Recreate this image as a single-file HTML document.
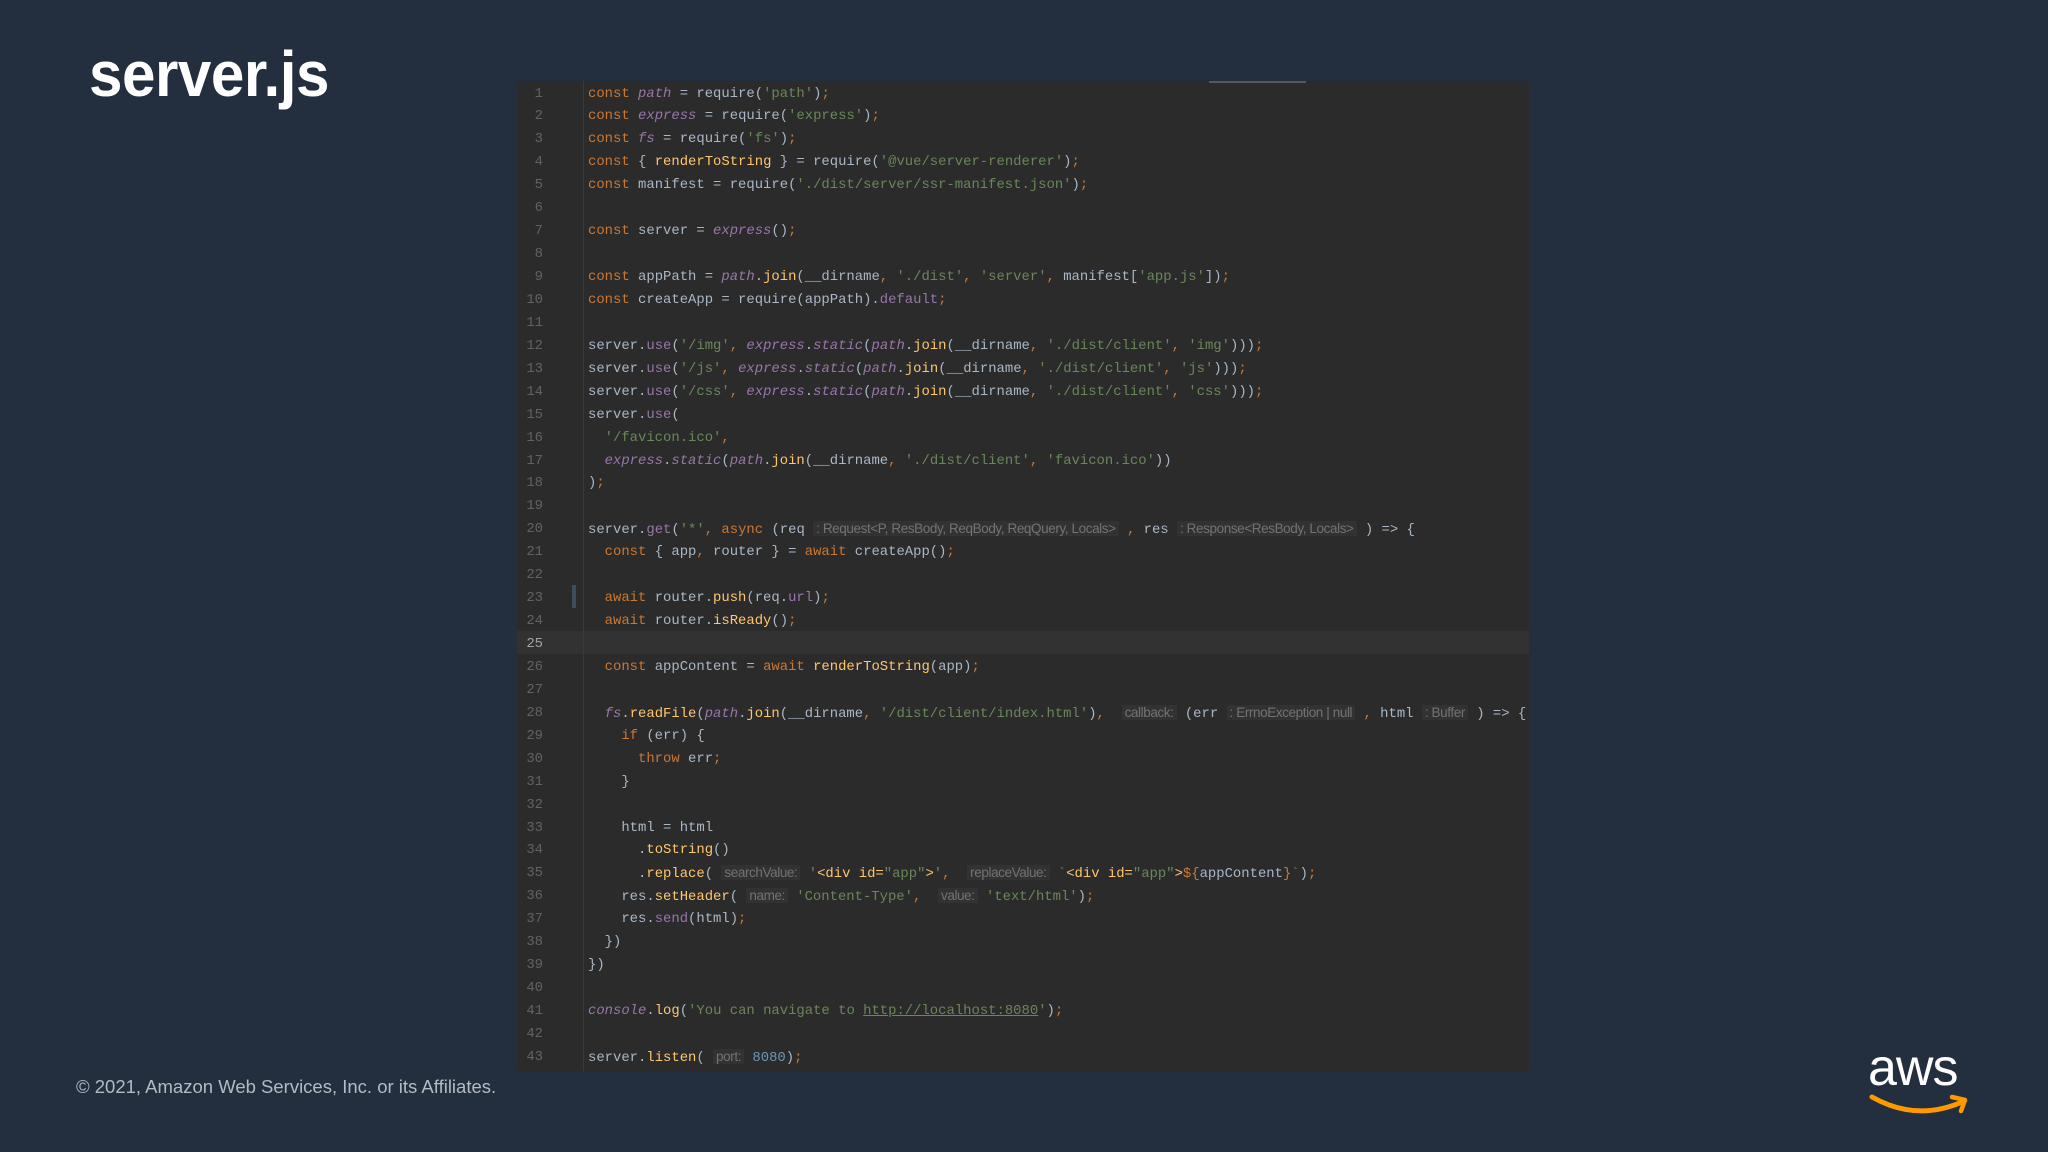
<!DOCTYPE html>
<html><head><meta charset="utf-8"><style>
html,body{margin:0;padding:0}
body{width:2048px;height:1152px;background:#232f3e;position:relative;overflow:hidden;font-family:"Liberation Sans",sans-serif}
.title{position:absolute;left:89px;top:37px;color:#fff;font-weight:bold;font-size:64px;transform:scaleX(0.94);transform-origin:left top;letter-spacing:-0.5px}
.copy{position:absolute;left:76px;top:1076px;color:#b4bac3;font-size:18.5px}
.panel{position:absolute;left:517px;top:81px;width:1012px;height:990px;background:#2b2b2b}
.topline{position:absolute;left:692px;top:0;width:97px;height:2px;background:#55595e}
.sep{position:absolute;left:66px;top:0;width:1px;height:990px;background:#3a3a3a}
.hl{position:absolute;left:0;right:0;top:550px;height:23px;background:#323232}
.mark{position:absolute;left:55px;top:504px;width:4px;height:23px;background:#3d4d5c}
.lines{position:absolute;left:0;top:1.5px;font-family:"Liberation Mono",monospace;font-size:13.9px;color:#a9b7c6}
.l{height:22.95px;line-height:22.95px;white-space:pre;position:relative}
.n{position:absolute;left:0;width:26px;text-align:right;color:#5f6366}
.n.c{color:#a4a3a3}
.t{position:absolute;left:71px}
.k{color:#cc7832}.s{color:#6a8759}.p{color:#9876aa;font-style:italic}.f{color:#ffc66d}.m{color:#9876aa}.nu{color:#6897bb}
.h{font-family:"Liberation Sans",sans-serif;font-size:13.5px;color:#737373;background:#323232;padding:0 3px;letter-spacing:-0.4px}
.u{text-decoration:underline}
</style></head><body>
<div class="title">server.js</div>
<div class="panel">
<div class="hl"></div><div class="mark"></div>
<div class="topline"></div><div class="sep"></div>
<div class="lines">
<div class="l"><span class="n">1</span><span class="t"><span class="k">const</span> <span class="p">path</span> = require(<span class="s">'path'</span>)<span class="k">;</span></span></div>
<div class="l"><span class="n">2</span><span class="t"><span class="k">const</span> <span class="p">express</span> = require(<span class="s">'express'</span>)<span class="k">;</span></span></div>
<div class="l"><span class="n">3</span><span class="t"><span class="k">const</span> <span class="p">fs</span> = require(<span class="s">'fs'</span>)<span class="k">;</span></span></div>
<div class="l"><span class="n">4</span><span class="t"><span class="k">const</span> { <span class="f">renderToString</span> } = require(<span class="s">'@vue/server-renderer'</span>)<span class="k">;</span></span></div>
<div class="l"><span class="n">5</span><span class="t"><span class="k">const</span> manifest = require(<span class="s">'./dist/server/ssr-manifest.json'</span>)<span class="k">;</span></span></div>
<div class="l"><span class="n">6</span></div>
<div class="l"><span class="n">7</span><span class="t"><span class="k">const</span> server = <span class="p">express</span>()<span class="k">;</span></span></div>
<div class="l"><span class="n">8</span></div>
<div class="l"><span class="n">9</span><span class="t"><span class="k">const</span> appPath = <span class="p">path</span>.<span class="f">join</span>(__dirname<span class="k">,</span> <span class="s">'./dist'</span><span class="k">,</span> <span class="s">'server'</span><span class="k">,</span> manifest[<span class="s">'app.js'</span>])<span class="k">;</span></span></div>
<div class="l"><span class="n">10</span><span class="t"><span class="k">const</span> createApp = require(appPath).<span class="m">default</span><span class="k">;</span></span></div>
<div class="l"><span class="n">11</span></div>
<div class="l"><span class="n">12</span><span class="t">server.<span class="m">use</span>(<span class="s">'/img'</span><span class="k">,</span> <span class="p">express</span>.<span class="p">static</span>(<span class="p">path</span>.<span class="f">join</span>(__dirname<span class="k">,</span> <span class="s">'./dist/client'</span><span class="k">,</span> <span class="s">'img'</span>)))<span class="k">;</span></span></div>
<div class="l"><span class="n">13</span><span class="t">server.<span class="m">use</span>(<span class="s">'/js'</span><span class="k">,</span> <span class="p">express</span>.<span class="p">static</span>(<span class="p">path</span>.<span class="f">join</span>(__dirname<span class="k">,</span> <span class="s">'./dist/client'</span><span class="k">,</span> <span class="s">'js'</span>)))<span class="k">;</span></span></div>
<div class="l"><span class="n">14</span><span class="t">server.<span class="m">use</span>(<span class="s">'/css'</span><span class="k">,</span> <span class="p">express</span>.<span class="p">static</span>(<span class="p">path</span>.<span class="f">join</span>(__dirname<span class="k">,</span> <span class="s">'./dist/client'</span><span class="k">,</span> <span class="s">'css'</span>)))<span class="k">;</span></span></div>
<div class="l"><span class="n">15</span><span class="t">server.<span class="m">use</span>(</span></div>
<div class="l"><span class="n">16</span><span class="t">  <span class="s">'/favicon.ico'</span><span class="k">,</span></span></div>
<div class="l"><span class="n">17</span><span class="t">  <span class="p">express</span>.<span class="p">static</span>(<span class="p">path</span>.<span class="f">join</span>(__dirname<span class="k">,</span> <span class="s">'./dist/client'</span><span class="k">,</span> <span class="s">'favicon.ico'</span>))</span></div>
<div class="l"><span class="n">18</span><span class="t">)<span class="k">;</span></span></div>
<div class="l"><span class="n">19</span></div>
<div class="l"><span class="n">20</span><span class="t">server.<span class="m">get</span>(<span class="s">'*'</span><span class="k">,</span> <span class="k">async</span> (req <span class="h">: Request&lt;P, ResBody, ReqBody, ReqQuery, Locals&gt;</span> <span class="k">,</span> res <span class="h">: Response&lt;ResBody, Locals&gt;</span> ) =&gt; {</span></div>
<div class="l"><span class="n">21</span><span class="t">  <span class="k">const</span> { app<span class="k">,</span> router } = <span class="k">await</span> createApp()<span class="k">;</span></span></div>
<div class="l"><span class="n">22</span></div>
<div class="l"><span class="n">23</span><span class="t">  <span class="k">await</span> router.<span class="f">push</span>(req.<span class="m">url</span>)<span class="k">;</span></span></div>
<div class="l"><span class="n">24</span><span class="t">  <span class="k">await</span> router.<span class="f">isReady</span>()<span class="k">;</span></span></div>
<div class="l"><span class="n c">25</span></div>
<div class="l"><span class="n">26</span><span class="t">  <span class="k">const</span> appContent = <span class="k">await</span> <span class="f">renderToString</span>(app)<span class="k">;</span></span></div>
<div class="l"><span class="n">27</span></div>
<div class="l"><span class="n">28</span><span class="t">  <span class="p">fs</span>.<span class="f">readFile</span>(<span class="p">path</span>.<span class="f">join</span>(__dirname<span class="k">,</span> <span class="s">'/dist/client/index.html'</span>)<span class="k">,</span>  <span class="h">callback:</span> (err <span class="h">: ErrnoException | null</span> <span class="k">,</span> html <span class="h">: Buffer</span> ) =&gt; {</span></div>
<div class="l"><span class="n">29</span><span class="t">    <span class="k">if</span> (err) {</span></div>
<div class="l"><span class="n">30</span><span class="t">      <span class="k">throw</span> err<span class="k">;</span></span></div>
<div class="l"><span class="n">31</span><span class="t">    }</span></div>
<div class="l"><span class="n">32</span></div>
<div class="l"><span class="n">33</span><span class="t">    html = html</span></div>
<div class="l"><span class="n">34</span><span class="t">      .<span class="f">toString</span>()</span></div>
<div class="l"><span class="n">35</span><span class="t">      .<span class="f">replace</span>( <span class="h">searchValue:</span> <span class="s">'</span><span class="f">&lt;div id=</span><span class="s">"app"</span><span class="f">&gt;</span><span class="s">'</span><span class="k">,</span>  <span class="h">replaceValue:</span> <span class="s">`</span><span class="f">&lt;div id=</span><span class="s">"app"</span><span class="f">&gt;</span><span class="k">${</span>appContent<span class="k">}</span><span class="s">`</span>)<span class="k">;</span></span></div>
<div class="l"><span class="n">36</span><span class="t">    res.<span class="f">setHeader</span>( <span class="h">name:</span> <span class="s">'Content-Type'</span><span class="k">,</span>  <span class="h">value:</span> <span class="s">'text/html'</span>)<span class="k">;</span></span></div>
<div class="l"><span class="n">37</span><span class="t">    res.<span class="m">send</span>(html)<span class="k">;</span></span></div>
<div class="l"><span class="n">38</span><span class="t">  })</span></div>
<div class="l"><span class="n">39</span><span class="t">})</span></div>
<div class="l"><span class="n">40</span></div>
<div class="l"><span class="n">41</span><span class="t"><span class="p">console</span>.<span class="f">log</span>(<span class="s">'You can navigate to <span class="u">http://localhost:8080</span>'</span>)<span class="k">;</span></span></div>
<div class="l"><span class="n">42</span></div>
<div class="l"><span class="n">43</span><span class="t">server.<span class="f">listen</span>( <span class="h">port:</span> <span class="nu">8080</span>)<span class="k">;</span></span></div>
</div>
</div>
<div class="copy">© 2021, Amazon Web Services, Inc. or its Affiliates.</div>
<svg style="position:absolute;left:1866px;top:1040px" width="110" height="80" viewBox="0 0 110 80">
<text x="2" y="45" fill="#fff" font-family="Liberation Sans,sans-serif" font-size="52" letter-spacing="-1">aws</text>
<path d="M6 57 Q50 82 96 62" stroke="#ff9900" stroke-width="5" fill="none" stroke-linecap="round"/>
<path d="M86 57 L99 60 L95 71" stroke="#ff9900" stroke-width="4.5" fill="none" stroke-linecap="round" stroke-linejoin="round"/>
</svg>
</body></html>
